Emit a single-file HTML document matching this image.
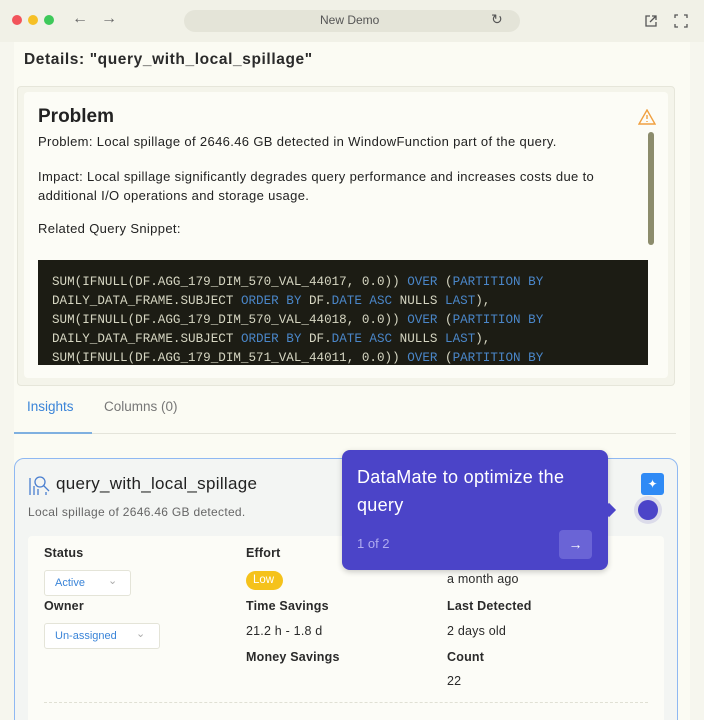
<!DOCTYPE html>
<html style="overflow:hidden;height:720px"><head><style>
*{margin:0;padding:0;box-sizing:border-box}
html,body{width:704px;height:720px;overflow:hidden}
body{background:#f6f6ee;font-family:"Liberation Sans",sans-serif;color:#222;position:relative}
.a{position:absolute;white-space:nowrap}
.mono{font-family:"Liberation Mono",monospace;font-size:12.6px;color:#d6d6c2}
.k{color:#4a86c8}
.lbl{font-size:12.5px;font-weight:bold;color:#2a2a2a;letter-spacing:.2px}
.val{font-size:12.5px;color:#2a2a2a;letter-spacing:.2px}
.t{font-size:13px;letter-spacing:.35px}
</style></head><body>
<div class="a" style="left:0;top:0;width:704px;height:42px;background:#f1f1e7"></div>
<div class="a" style="left:12px;top:15px;width:10px;height:10px;border-radius:50%;background:#f2545b"></div>
<div class="a" style="left:28px;top:15px;width:10px;height:10px;border-radius:50%;background:#f6c026"></div>
<div class="a" style="left:44px;top:15px;width:10px;height:10px;border-radius:50%;background:#3ec95a"></div>
<div class="a" style="left:72px;top:10px;font-size:16px;color:#666">&#8592;</div>
<div class="a" style="left:101px;top:10px;font-size:16px;color:#666">&#8594;</div>
<div class="a" style="left:184px;top:10px;width:336px;height:22px;border-radius:11px;background:#e4e4d8"></div>
<div class="a" style="left:320px;top:13px;font-size:12px;color:#555">New Demo</div>
<div class="a" style="left:491px;top:11px;font-size:14px;color:#555">&#8635;</div>
<svg class="a" style="left:644px;top:14px" width="14" height="14" viewBox="0 0 14 14" fill="none" stroke="#555" stroke-width="1.3"><path d="M6 2H2v10h10V8M8 2h4v4M12 2L6 8"/></svg>
<svg class="a" style="left:674px;top:14px" width="14" height="14" viewBox="0 0 14 14" fill="none" stroke="#555" stroke-width="1.3"><path d="M1 4V1h3M10 1h3v3M13 10v3h-3M4 13H1v-3"/></svg>
<div class="a" style="left:14px;top:42px;width:676px;height:678px;background:#fbfbf3"></div>
<div class="a" style="left:24px;top:51px;font-size:15.5px;font-weight:bold;color:#2a2a2a;letter-spacing:.6px">Details: "query_with_local_spillage"</div>
<div class="a" style="left:17px;top:86px;width:658px;height:300px;background:#f4f4ea;border:1px solid #e6e6da;border-radius:4px"></div>
<div class="a" style="left:24px;top:92px;width:644px;height:286px;background:#fcfcf6;border-radius:4px"></div>
<div class="a" style="left:38px;top:106px;font-size:19px;font-weight:bold;color:#222">Problem</div>
<svg class="a" style="left:638px;top:109px" width="18" height="16" viewBox="0 0 18 16" fill="none" stroke="#f0a040" stroke-width="1.4"><path d="M9 1L17 15H1Z"/><path d="M9 6v4M9 12v1"/></svg>
<div class="a" style="left:648px;top:132px;width:6px;height:113px;border-radius:3px;background:#8c8c6c"></div>
<div class="a t" style="left:38px;top:134px">Problem: Local spillage of 2646.46 GB detected in WindowFunction part of the query.</div>
<div class="a t" style="left:38px;top:167px;line-height:19px">Impact: Local spillage significantly degrades query performance and increases costs due to<br>additional I/O operations and storage usage.</div>
<div class="a t" style="left:38px;top:221px">Related Query Snippet:</div>
<div class="a" style="left:38px;top:260px;width:610px;height:105px;background:#1c1c14;overflow:hidden">
<div class="a mono" style="left:14px;top:13px;line-height:19px">SUM(IFNULL(DF.AGG_179_DIM_570_VAL_44017, 0.0)) <span class="k">OVER</span> (<span class="k">PARTITION BY</span><br>DAILY_DATA_FRAME.SUBJECT <span class="k">ORDER BY</span> DF.<span class="k">DATE ASC</span> NULLS <span class="k">LAST</span>),<br>SUM(IFNULL(DF.AGG_179_DIM_570_VAL_44018, 0.0)) <span class="k">OVER</span> (<span class="k">PARTITION BY</span><br>DAILY_DATA_FRAME.SUBJECT <span class="k">ORDER BY</span> DF.<span class="k">DATE ASC</span> NULLS <span class="k">LAST</span>),<br>SUM(IFNULL(DF.AGG_179_DIM_571_VAL_44011, 0.0)) <span class="k">OVER</span> (<span class="k">PARTITION BY</span></div></div>
<div class="a" style="left:27px;top:399px;font-size:13.5px;color:#3a84d8">Insights</div>
<div class="a" style="left:104px;top:399px;font-size:13.5px;color:#777">Columns (0)</div>
<div class="a" style="left:14px;top:433px;width:662px;height:1px;background:#e4e4da"></div>
<div class="a" style="left:14px;top:432px;width:78px;height:2px;background:#7fb0e0"></div>
<div class="a" style="left:14px;top:458px;width:664px;height:280px;border:1.5px solid #8fb8f2;border-radius:10px;background:#f3f5f3"></div>
<svg class="a" style="left:28px;top:474px" width="24" height="22" viewBox="0 0 24 22" fill="none" stroke="#4a7fd0" stroke-width="1.3"><circle cx="12" cy="8" r="5"/><path d="M15.5 11.5L21 17M2 21V4M6 21V12M10 21v-6M18 21v-3"/></svg>
<div class="a" style="left:56px;top:474px;font-size:17px;color:#222;letter-spacing:.3px">query_with_local_spillage</div>
<div class="a" style="left:28px;top:505px;font-size:12px;color:#666;letter-spacing:.3px">Local spillage of 2646.46 GB detected.</div>
<div class="a" style="left:28px;top:536px;width:636px;height:200px;background:#fcfcf7;border-radius:4px"></div>
<div class="a" style="left:44px;top:702px;width:604px;border-top:1px dashed #e0e0d4"></div>
<div class="a lbl" style="left:44px;top:546px">Status</div>
<div class="a" style="left:44px;top:570px;width:87px;height:26px;border:1px solid #e4e4d8;border-radius:3px;background:#fff"></div>
<div class="a" style="left:55px;top:577px;font-size:11px;color:#3a84d8">Active</div>
<div class="a" style="left:108px;top:574px;font-size:11px;color:#aaa">&#8964;</div>
<div class="a lbl" style="left:44px;top:599px">Owner</div>
<div class="a" style="left:44px;top:623px;width:116px;height:26px;border:1px solid #e4e4d8;border-radius:3px;background:#fff"></div>
<div class="a" style="left:55px;top:630px;font-size:11px;color:#3a84d8">Un-assigned</div>
<div class="a" style="left:136px;top:627px;font-size:11px;color:#aaa">&#8964;</div>
<div class="a lbl" style="left:246px;top:546px">Effort</div>
<div class="a" style="left:246px;top:571px;width:37px;height:19px;border-radius:10px;background:#f5c21b"></div>
<div class="a" style="left:253px;top:574px;font-size:11.5px;color:#fff">Low</div>
<div class="a lbl" style="left:246px;top:599px">Time Savings</div>
<div class="a val" style="left:246px;top:624px">21.2 h - 1.8 d</div>
<div class="a lbl" style="left:246px;top:650px">Money Savings</div>
<div class="a val" style="left:447px;top:572px">a month ago</div>
<div class="a lbl" style="left:447px;top:599px">Last Detected</div>
<div class="a val" style="left:447px;top:624px">2 days old</div>
<div class="a lbl" style="left:447px;top:650px">Count</div>
<div class="a val" style="left:447px;top:674px">22</div>
<div class="a" style="left:641px;top:473px;width:23px;height:22px;border-radius:3px;background:#2f8af5;color:#fff;font-size:12px;text-align:center;line-height:22px">&#10022;</div>
<div class="a" style="left:634px;top:496px;width:28px;height:28px;border-radius:50%;background:#dcdcea"></div>
<div class="a" style="left:638px;top:500px;width:20px;height:20px;border-radius:50%;background:#4b44c8"></div>
<div class="a" style="left:342px;top:450px;width:266px;height:120px;border-radius:8px;background:#4b44c8;box-shadow:0 2px 6px rgba(0,0,0,.2)"></div>
<div class="a" style="left:604px;top:505px;width:10px;height:10px;background:#4b44c8;transform:rotate(45deg)"></div>
<div class="a" style="left:357px;top:463px;font-size:18px;line-height:28px;color:#fff;letter-spacing:.3px">DataMate to optimize the<br>query</div>
<div class="a" style="left:357px;top:536px;font-size:13px;color:#b0acf0">1 of 2</div>
<div class="a" style="left:559px;top:530px;width:33px;height:29px;border-radius:4px;background:#6a64d6;color:#fff;text-align:center;line-height:29px;font-size:14px">&#8594;</div>
</body></html>
